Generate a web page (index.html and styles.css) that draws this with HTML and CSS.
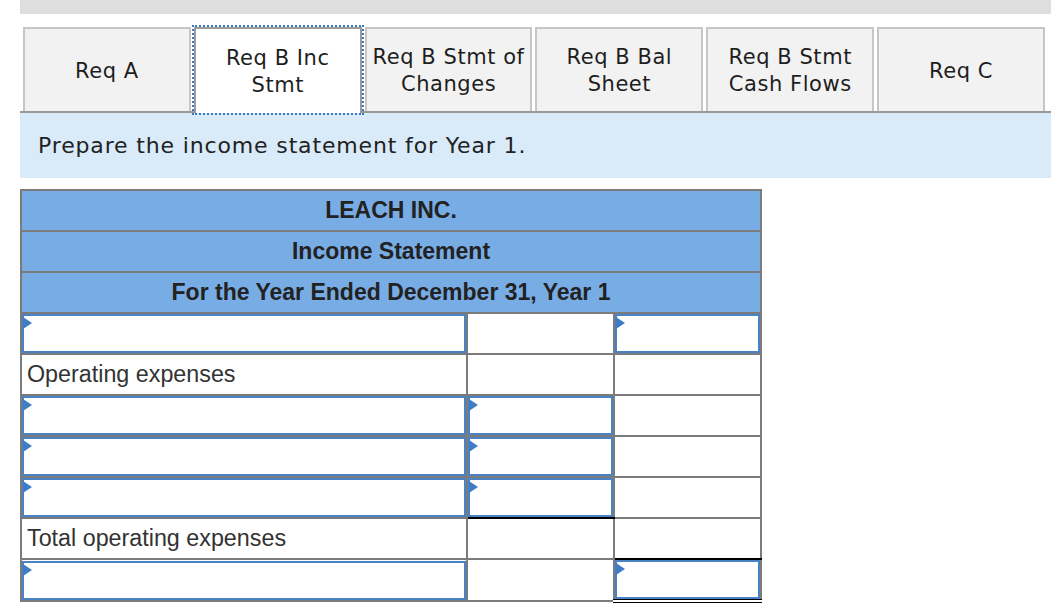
FILE: index.html
```html
<!DOCTYPE html>
<html>
<head>
<meta charset="utf-8">
<link rel="stylesheet" href="styles.css">
</head>
<body>
<div class="page">
  <div class="topbar"></div>
  <div class="tabs">
    <div class="tab"><span>Req A</span></div>
    <div class="tab active"><span>Req B Inc<br>Stmt</span></div>
    <div class="tab"><span>Req B Stmt of<br>Changes</span></div>
    <div class="tab"><span>Req B Bal<br>Sheet</span></div>
    <div class="tab"><span>Req B Stmt<br>Cash Flows</span></div>
    <div class="tab"><span>Req C</span></div>
  </div>
  <div class="instruction">Prepare the income statement for Year 1.</div>
  <table class="sheet">
    <colgroup>
      <col class="c1"><col class="c2"><col class="c3">
    </colgroup>
    <tr class="head"><td colspan="3">LEACH INC.</td></tr>
    <tr class="head"><td colspan="3">Income Statement</td></tr>
    <tr class="head"><td colspan="3">For the Year Ended December 31, Year 1</td></tr>
    <tr>
      <td><div class="inp"><i class="mark"></i></div></td>
      <td></td>
      <td><div class="inp"><i class="mark"></i></div></td>
    </tr>
    <tr>
      <td class="label">Operating expenses</td>
      <td></td>
      <td></td>
    </tr>
    <tr>
      <td><div class="inp"><i class="mark"></i></div></td>
      <td><div class="inp"><i class="mark"></i></div></td>
      <td></td>
    </tr>
    <tr>
      <td><div class="inp"><i class="mark"></i></div></td>
      <td><div class="inp"><i class="mark"></i></div></td>
      <td></td>
    </tr>
    <tr>
      <td><div class="inp"><i class="mark"></i></div></td>
      <td class="under"><div class="inp"><i class="mark"></i></div></td>
      <td></td>
    </tr>
    <tr>
      <td class="label">Total operating expenses</td>
      <td></td>
      <td class="under"></td>
    </tr>
    <tr>
      <td><div class="inp"><i class="mark"></i></div></td>
      <td></td>
      <td class="double"><div class="inp"><i class="mark"></i></div></td>
    </tr>
  </table>
</div>
</body>
</html>
```
FILE: styles.css
```css
html, body {
  margin: 0;
  padding: 0;
  background: #ffffff;
}

.page {
  padding-left: 20px;
}

.topbar {
  height: 14px;
  background: #dedede;
}

.tabs {
  display: flex;
  gap: 3px;
  margin-top: 13px;
  padding: 0 6px 0 3px;
  border-bottom: 2px solid #999999;
  height: 84px;
}

.tab {
  flex: 1;
  display: flex;
  align-items: center;
  justify-content: center;
  text-align: center;
  background: #f2f2f2;
  border: 2px solid #c6c6c6;
  border-bottom: none;
  font-family: "DejaVu Sans", Verdana, sans-serif;
  font-size: 21px;
  letter-spacing: 0.55px;
  line-height: 27px;
  color: #1e1e1e;
}

.tab span {
  display: block;
  margin-top: 2px;
}

.tab.active {
  background: #ffffff;
  border-color: #9a9a9a;
  height: 84px;
  outline: 2px dotted #3b78c4;
  outline-offset: 0px;
  position: relative;
  z-index: 1;
}

.instruction {
  background: #d9eaf8;
  height: 65px;
  padding-left: 18px;
  display: flex;
  align-items: center;
  font-family: "DejaVu Sans", Verdana, sans-serif;
  font-size: 22px;
  letter-spacing: 0.85px;
  color: #222222;
}

.sheet {
  margin-top: 11px;
  border-collapse: collapse;
  table-layout: fixed;
  width: 740px;
  font-family: "Liberation Sans", Arial, sans-serif;
}

.sheet col.c1 { width: 446px; }
.sheet col.c2 { width: 147px; }
.sheet col.c3 { width: 147px; }

.sheet td {
  border: 2px solid #7b7b7b;
  height: 41px;
  padding: 0;
  box-sizing: border-box;
}

.sheet tr.head td {
  background: #78ace4;
  text-align: center;
  font-weight: bold;
  font-size: 23px;
  color: #222222;
}

.sheet td.label {
  padding-left: 5px;
  font-size: 23.3px;
  color: #333333;
}

.sheet td.under {
  border-bottom: 2px solid #000000;
}

.sheet td.double {
  border-bottom: 4px double #000000;
}

.inp {
  position: relative;
  height: 39px;
  box-sizing: border-box;
  border: 2px solid #4a82c6;
  background: #ffffff;
}

.mark {
  position: absolute;
  left: -1px;
  top: 1px;
  width: 0;
  height: 0;
  border-top: 6px solid transparent;
  border-bottom: 6px solid transparent;
  border-left: 9px solid #3f7cc6;
}
```
